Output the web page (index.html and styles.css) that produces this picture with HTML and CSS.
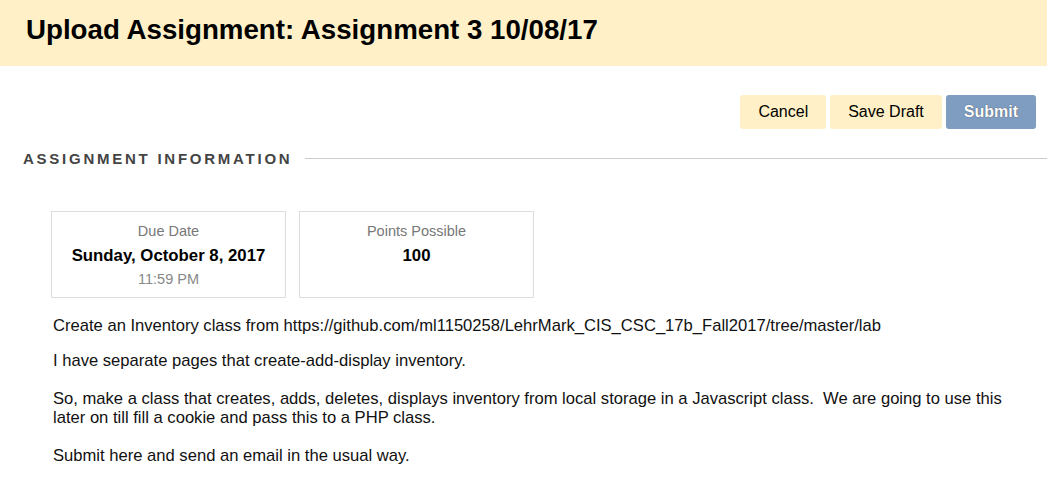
FILE: index.html
```html
<!DOCTYPE html>
<html>
<head>
<meta charset="utf-8">
<link rel="stylesheet" href="styles.css">
</head>
<body>
<header class="page-header">
  <h1 class="page-title">Upload Assignment: Assignment 3 10/08/17</h1>
</header>
<div class="actions">
  <button class="btn">Cancel</button>
  <button class="btn">Save Draft</button>
  <button class="btn btn-primary">Submit</button>
</div>
<div class="section-head">
  <h2 class="section-title">ASSIGNMENT INFORMATION</h2>
  <div class="section-rule"></div>
</div>
<div class="content">
  <div class="cards">
    <div class="card">
      <div class="card-label">Due Date</div>
      <div class="card-value">Sunday, October 8, 2017</div>
      <div class="card-sub">11:59 PM</div>
    </div>
    <div class="card">
      <div class="card-label">Points Possible</div>
      <div class="card-value">100</div>
    </div>
  </div>
  <div class="desc">
    <p class="first">Create an Inventory class from https://github.com/ml1150258/LehrMark_CIS_CSC_17b_Fall2017/tree/master/lab</p>
    <p>I have separate pages that create-add-display inventory.</p>
    <p>So, make a class that creates, adds, deletes, displays inventory from local storage in a Javascript class.&nbsp; We are going to use this later on till fill a cookie and pass this to a PHP class.</p>
    <p>Submit here and send an email in the usual way.</p>
  </div>
</div>
</body>
</html>
```

FILE: styles.css
```css
* { box-sizing: border-box; }
html, body { margin: 0; padding: 0; background: #fff; }
body {
  font-family: "Liberation Sans", Arial, sans-serif;
  color: #000;
  width: 1047px;
  overflow: hidden;
}
.page-header {
  background: #fff0c7;
  height: 66px;
  padding: 14px 26px 0;
}
.page-title {
  margin: 0;
  font-size: 27.7px;
  font-weight: bold;
  line-height: 32px;
  color: #000;
}
.actions {
  display: flex;
  justify-content: flex-end;
  gap: 4px;
  padding: 29px 11px 0 0;
}
.btn {
  font-family: "Liberation Sans", Arial, sans-serif;
  font-size: 16px;
  height: 34px;
  padding: 0 18px;
  border: none;
  border-radius: 3px;
  background: #fff0c7;
  color: #000;
}
.btn-primary {
  background: #7f9cc1;
  color: #fff;
  font-weight: bold;
  text-shadow: 0 0 1px #334;
}
.section-head {
  display: flex;
  align-items: center;
  gap: 13px;
  padding: 20px 0 0 23px;
}
.section-title {
  margin: 0;
  font-size: 15px;
  font-weight: bold;
  letter-spacing: 2.75px;
  color: #444;
  line-height: 20px;
  white-space: nowrap;
}
.section-rule {
  flex: 1;
  height: 1px;
  background: #ccc;
  margin-top: -1px;
}
.content {
  padding: 42px 38px 0 51px;
}
.cards {
  display: flex;
  gap: 13px;
}
.card {
  width: 235px;
  height: 87px;
  border: 1px solid #ddd;
  text-align: center;
  padding-top: 10px;
}
.card-label {
  font-size: 14.5px;
  color: #777;
  line-height: 18px;
}
.card-value {
  font-size: 16.8px;
  font-weight: bold;
  line-height: 22px;
  margin-top: 5px;
}
.card-sub {
  font-size: 14.5px;
  color: #888;
  line-height: 18px;
  margin-top: 3px;
}
.desc {
  padding: 18px 0 0 2px;
}
.desc p {
  margin: 0 0 19px;
  font-size: 16.6px;
  line-height: 19px;
  color: #111;
}
.desc p.first {
  margin-bottom: 16px;
}
```
